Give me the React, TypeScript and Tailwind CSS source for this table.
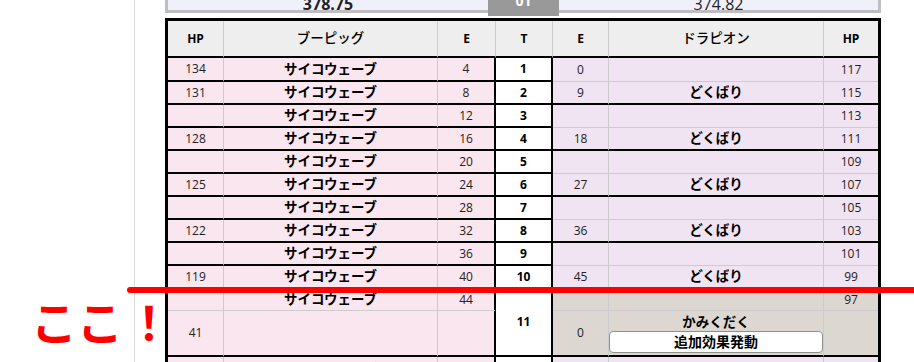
import { Fragment, type ReactNode } from "react";

type Turn = {
  hp: string;
  e: string;
  t: string;
  foeE: string;
  foeMove: string;
  foeHp: string;
};

const MOVE = "サイコウェーブ";

const turns: Turn[] = [
  { hp: "134", e: "4", t: "1", foeE: "0", foeMove: "", foeHp: "117" },
  { hp: "131", e: "8", t: "2", foeE: "9", foeMove: "どくばり", foeHp: "115" },
  { hp: "", e: "12", t: "3", foeE: "", foeMove: "", foeHp: "113" },
  { hp: "128", e: "16", t: "4", foeE: "18", foeMove: "どくばり", foeHp: "111" },
  { hp: "", e: "20", t: "5", foeE: "", foeMove: "", foeHp: "109" },
  { hp: "125", e: "24", t: "6", foeE: "27", foeMove: "どくばり", foeHp: "107" },
  { hp: "", e: "28", t: "7", foeE: "", foeMove: "", foeHp: "105" },
  { hp: "122", e: "32", t: "8", foeE: "36", foeMove: "どくばり", foeHp: "103" },
  { hp: "", e: "36", t: "9", foeE: "", foeMove: "", foeHp: "101" },
  { hp: "119", e: "40", t: "10", foeE: "45", foeMove: "どくばり", foeHp: "99" },
];

// shared cell styles
const PINK = "bg-[#fae6ee]";
const LILAC = "bg-[#f0e4f2]";
const STONE = "bg-[#dcd8d1]";
const RULE_R = "border-r border-r-[#cccccc]";
const THICK_R = "border-r-2 border-r-black";
const THICK_B = "border-b-2 border-b-black";
const RULE_B = "border-b border-b-[#cccccc]";
const NUM = "text-[12px] text-[#222]";
const MOVE_TXT = "text-[13.5px] font-bold text-black";

function Cell({ className = "", children }: { className?: string; children?: ReactNode }) {
  return <div className={`flex items-center justify-center ${className}`}>{children}</div>;
}

function ScorePanel() {
  return (
    <div className="-mt-[8px] grid h-[21px] w-[716px] grid-cols-[320px_71px_1fr] border-x-[3px] border-b-[3px] border-[#bdbdc2] bg-[#f0f0fa]">
      <div className="flex items-center justify-center text-[16px] font-bold text-[#222]">378.75</div>
      <div className="flex items-center justify-center bg-[#999999] pb-[7px] text-[14px] font-bold leading-none text-white">
        01
      </div>
      <div className="flex items-center justify-center text-[16px] text-[#222]">374.82</div>
    </div>
  );
}

function Header() {
  const head = `bg-[#eeeeee] text-black ${THICK_B}`;
  return (
    <>
      <Cell className={`${head} ${RULE_R} text-[12px] font-bold`}>HP</Cell>
      <Cell className={`${head} ${RULE_R} text-[13.5px] font-medium`}>ブーピッグ</Cell>
      <Cell className={`${head} ${RULE_R} text-[12px] font-bold`}>E</Cell>
      <Cell className={`${head} ${RULE_R} text-[12px] font-bold`}>T</Cell>
      <Cell className={`${head} ${RULE_R} text-[12px] font-bold`}>E</Cell>
      <Cell className={`${head} ${RULE_R} text-[13.5px] font-medium`}>ドラピオン</Cell>
      <Cell className={`${head} text-[12px] font-bold`}>HP</Cell>
    </>
  );
}

function BattleTable() {
  return (
    <div className="mt-[5px] grid w-[716px] grid-cols-[56px_214px_58px_57px_56px_215px_54px] grid-rows-[37px_24px_repeat(9,23px)_22px_46px_23px] border-[3px] border-black">
      <Header />

      {turns.map((row, i) => {
        const foeB = i % 2 === 1 ? THICK_B : RULE_B;
        return (
          <Fragment key={row.t}>
            <Cell className={`${PINK} ${RULE_R} ${THICK_B} ${NUM}`}>{row.hp}</Cell>
            <Cell className={`${PINK} ${RULE_R} ${THICK_B} ${MOVE_TXT}`}>{MOVE}</Cell>
            <Cell className={`${PINK} ${THICK_R} ${THICK_B} ${NUM}`}>{row.e}</Cell>
            <Cell className={`bg-white ${THICK_R} ${THICK_B} text-[12px] font-bold`}>{row.t}</Cell>
            <Cell className={`${LILAC} ${RULE_R} ${foeB} ${NUM}`}>{row.foeE}</Cell>
            <Cell className={`${LILAC} ${RULE_R} ${foeB} ${MOVE_TXT}`}>{row.foeMove}</Cell>
            <Cell className={`${LILAC} ${foeB} ${NUM}`}>{row.foeHp}</Cell>
          </Fragment>
        );
      })}

      {/* turn 11: split into two sub-rows */}
      <Cell className={`${PINK} ${RULE_R} ${RULE_B} ${NUM}`} />
      <Cell className={`${PINK} ${RULE_R} ${RULE_B} ${MOVE_TXT}`}>{MOVE}</Cell>
      <Cell className={`${PINK} ${THICK_R} ${RULE_B} ${NUM}`}>44</Cell>
      <Cell className={`row-span-2 bg-white ${THICK_R} ${THICK_B} text-[12px] font-bold`}>11</Cell>
      <Cell className={`${STONE} ${RULE_R} ${RULE_B} ${NUM}`} />
      <Cell className={`${STONE} ${RULE_R} ${RULE_B}`} />
      <Cell className={`${STONE} ${RULE_B} ${NUM}`}>97</Cell>

      <Cell className={`${PINK} ${RULE_R} ${THICK_B} ${NUM}`}>41</Cell>
      <Cell className={`${PINK} ${RULE_R} ${THICK_B}`} />
      <Cell className={`${PINK} ${THICK_R} ${THICK_B}`} />
      <Cell className={`${STONE} ${RULE_R} ${THICK_B} ${NUM}`}>0</Cell>
      <div className={`flex flex-col justify-center ${STONE} ${RULE_R} ${THICK_B}`}>
        <div className={`text-center leading-[18px] ${MOVE_TXT}`}>かみくだく</div>
        <button className="h-[22px] w-full rounded-[4px] border border-[#8f8f8f] bg-white text-[14px] font-bold leading-none text-black">
          追加効果発動
        </button>
      </div>
      <Cell className={`${STONE} ${THICK_B}`} />

      {/* turn 12 */}
      <Cell className={`${PINK} ${RULE_R} ${THICK_B} ${NUM}`}>116</Cell>
      <div className={`flex justify-center pt-[3px] leading-[18px] ${PINK} ${RULE_R} ${THICK_B} ${MOVE_TXT}`}>
        {MOVE}
      </div>
      <Cell className={`${PINK} ${THICK_R} ${THICK_B} ${NUM}`}>48</Cell>
      <Cell className={`bg-white ${THICK_R} ${THICK_B} text-[12px] font-bold`}>12</Cell>
      <Cell className={`${LILAC} ${RULE_R} ${RULE_B} ${NUM}`} />
      <Cell className={`${LILAC} ${RULE_R} ${RULE_B}`} />
      <Cell className={`${LILAC} ${RULE_B} ${NUM}`}>95</Cell>
    </div>
  );
}

export default function App() {
  return (
    <div className="relative flex h-[362px] w-full overflow-hidden bg-white font-['Open_Sans','Noto_Sans_CJK_JP',sans-serif]">
      <aside className="h-full w-[135px] shrink-0 border-r border-r-[#dddddd]" />
      <main className="flex flex-col pl-[30px]">
        <ScorePanel />
        <BattleTable />
      </main>

      {/* hand-drawn marker */}
      <div className="absolute left-[127px] top-[287px] h-[6px] w-[800px] rounded-l-full bg-[#ff0000]" />
      <div className="absolute left-[31px] top-[297px] flex font-['Noto_Sans_CJK_JP',sans-serif] text-[46px] font-bold leading-none text-[#ff0000]">
        <span>ここ</span>
        <span className="ml-[3px]">！</span>
      </div>
    </div>
  );
}
